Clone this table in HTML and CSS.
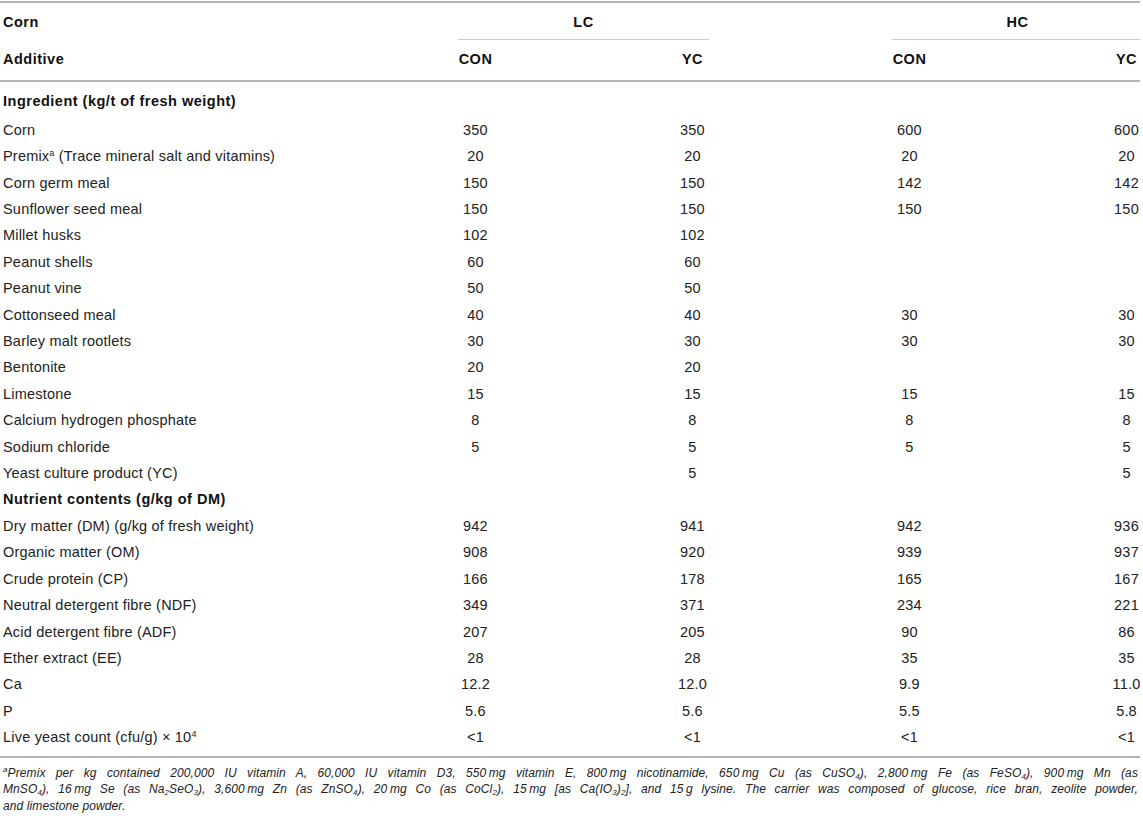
FILE: index.html
```html
<!DOCTYPE html>
<html lang="en">
<head>
    <meta charset="UTF-8">
    <title>Diet composition</title>
    <link rel="stylesheet" href="styles.css">
</head>
<body>
    <div class="table-wrap">
        <table class="diet">
            <colgroup>
                <col class="c-label">
                <col class="c-val">
                <col class="c-val">
                <col class="c-val">
                <col class="c-val">
            </colgroup>
            <thead>
                <tr class="group-row">
                    <th class="label">Corn</th>
                    <th colspan="2"><div class="group">LC</div></th>
                    <th colspan="2"><div class="group">HC</div></th>
                </tr>
                <tr class="sub-row">
                    <th class="label">Additive</th>
                    <th>CON</th>
                    <th>YC</th>
                    <th>CON</th>
                    <th>YC</th>
                </tr>
            </thead>
            <tbody>
                <tr class="section first"><td class="label" colspan="5">Ingredient (kg/t of fresh weight)</td></tr>
                <tr><td class="label">Corn</td><td>350</td><td>350</td><td>600</td><td>600</td></tr>
                <tr><td class="label">Premix<sup>a</sup> (Trace mineral salt and vitamins)</td><td>20</td><td>20</td><td>20</td><td>20</td></tr>
                <tr><td class="label">Corn germ meal</td><td>150</td><td>150</td><td>142</td><td>142</td></tr>
                <tr><td class="label">Sunflower seed meal</td><td>150</td><td>150</td><td>150</td><td>150</td></tr>
                <tr><td class="label">Millet husks</td><td>102</td><td>102</td><td></td><td></td></tr>
                <tr><td class="label">Peanut shells</td><td>60</td><td>60</td><td></td><td></td></tr>
                <tr><td class="label">Peanut vine</td><td>50</td><td>50</td><td></td><td></td></tr>
                <tr><td class="label">Cottonseed meal</td><td>40</td><td>40</td><td>30</td><td>30</td></tr>
                <tr><td class="label">Barley malt rootlets</td><td>30</td><td>30</td><td>30</td><td>30</td></tr>
                <tr><td class="label">Bentonite</td><td>20</td><td>20</td><td></td><td></td></tr>
                <tr><td class="label">Limestone</td><td>15</td><td>15</td><td>15</td><td>15</td></tr>
                <tr><td class="label">Calcium hydrogen phosphate</td><td>8</td><td>8</td><td>8</td><td>8</td></tr>
                <tr><td class="label">Sodium chloride</td><td>5</td><td>5</td><td>5</td><td>5</td></tr>
                <tr><td class="label">Yeast culture product (YC)</td><td></td><td>5</td><td></td><td>5</td></tr>
                <tr class="section"><td class="label" colspan="5">Nutrient contents (g/kg of DM)</td></tr>
                <tr><td class="label">Dry matter (DM) (g/kg of fresh weight)</td><td>942</td><td>941</td><td>942</td><td>936</td></tr>
                <tr><td class="label">Organic matter (OM)</td><td>908</td><td>920</td><td>939</td><td>937</td></tr>
                <tr><td class="label">Crude protein (CP)</td><td>166</td><td>178</td><td>165</td><td>167</td></tr>
                <tr><td class="label">Neutral detergent fibre (NDF)</td><td>349</td><td>371</td><td>234</td><td>221</td></tr>
                <tr><td class="label">Acid detergent fibre (ADF)</td><td>207</td><td>205</td><td>90</td><td>86</td></tr>
                <tr><td class="label">Ether extract (EE)</td><td>28</td><td>28</td><td>35</td><td>35</td></tr>
                <tr><td class="label">Ca</td><td>12.2</td><td>12.0</td><td>9.9</td><td>11.0</td></tr>
                <tr><td class="label">P</td><td>5.6</td><td>5.6</td><td>5.5</td><td>5.8</td></tr>
                <tr class="last"><td class="label">Live yeast count (cfu/g) &times; 10<sup>4</sup></td><td>&lt;1</td><td>&lt;1</td><td>&lt;1</td><td>&lt;1</td></tr>
            </tbody>
        </table>
    </div>
    <p class="footnote">
        <span class="line"><sup>a</sup>Premix per kg contained 200,000 IU vitamin A, 60,000 IU vitamin D3, 550&thinsp;mg vitamin E, 800&thinsp;mg nicotinamide, 650&thinsp;mg Cu (as CuSO<sub>4</sub>), 2,800&thinsp;mg Fe (as FeSO<sub>4</sub>), 900&thinsp;mg Mn (as</span>
        <span class="line">MnSO<sub>4</sub>), 16&thinsp;mg Se (as Na<sub>2</sub>SeO<sub>3</sub>), 3,600&thinsp;mg Zn (as ZnSO<sub>4</sub>), 20&thinsp;mg Co (as CoCl<sub>2</sub>), 15&thinsp;mg [as Ca(IO<sub>3</sub>)<sub>2</sub>], and 15&thinsp;g lysine. The carrier was composed of glucose, rice bran, zeolite powder,</span>
        <span class="line end">and limestone powder.</span>
    </p>
</body>
</html>
```

FILE: styles.css
```css
:root {
    --text: #222222;
    --rule: #b4b4b4;
    --rule-light: #cccccc;
}
html {
    background: #ffffff;
    color: var(--text);
    font-family: "Liberation Sans", Arial, sans-serif;
}
body {
    margin: 0;
    padding: 1px 0 0;
}
.table-wrap {
    width: 1140px;
    overflow: hidden;
}
.diet {
    width: 1235px;
    table-layout: fixed;
    border-collapse: separate;
    border-spacing: 0;
    font-size: 14.5px;
    letter-spacing: 0.2px;
}
.diet col.c-label {
    width: 367px;
}
.diet col.c-val {
    width: 217px;
}
.diet th,
.diet td {
    padding: 0;
    text-align: center;
    vertical-align: top;
    line-height: 26.4px;
    white-space: nowrap;
}
.diet .label {
    text-align: left;
    padding-left: 3px;
}
.diet th {
    font-weight: bold;
    color: #111;
    line-height: 26px;
    letter-spacing: 0.5px;
}
/* header rows */
.group-row th {
    border-top: 2px solid var(--rule);
    padding-top: 6px;
}
.group {
    margin: 0 92px 0 91px;
    padding-bottom: 4px;
    border-bottom: 1px solid var(--rule-light);
}
.sub-row th {
    padding: 6px 0 8px;
    border-bottom: 2px solid var(--rule);
}
/* body rows */
.section td {
    font-weight: bold;
    color: #111;
    letter-spacing: 0.5px;
}
.section.first td {
    padding-top: 6px;
    padding-bottom: 2.4px;
}
.last td {
    padding-bottom: 5.6px;
    border-bottom: 2px solid var(--rule);
}
sup {
    font-size: 9px;
    line-height: 0;
    vertical-align: 5px;
}
sub {
    font-size: 8px;
    line-height: 0;
    vertical-align: -2px;
}
/* footnote lines follow the printed breaks */
.footnote {
    margin: 7px 5px 0 3px;
    font-size: 12px;
    line-height: 16.3px;
    font-style: italic;
    letter-spacing: 0.1px;
}
.footnote .line {
    display: block;
    text-align: justify;
    text-align-last: justify;
    white-space: nowrap;
}
.footnote .line.end {
    text-align-last: left;
}
.footnote sup {
    font-size: 8px;
}
```
